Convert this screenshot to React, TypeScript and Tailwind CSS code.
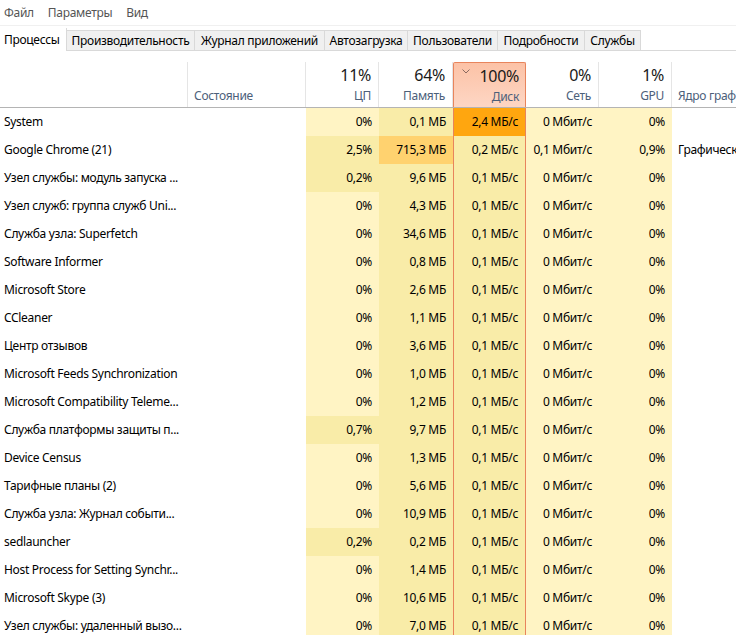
import React from "react";

const cols = "grid grid-cols-[187px_119px_73px_74px_73px_73px_73px_1fr]";

const L1 = "bg-[#fff4c4]";
const L2 = "bg-[#f9eca8]";

type Row = {
  name: string;
  cpu: string;
  mem: string;
  disk?: string;
  net?: string;
  gpu?: string;
  engine?: string;
};

const rows: Row[] = [
  { name: "System", cpu: "0%", mem: "0,1 МБ", disk: "2,4 МБ/с" },
  { name: "Google Chrome (21)", cpu: "2,5%", mem: "715,3 МБ", disk: "0,2 МБ/с", net: "0,1 Мбит/с", gpu: "0,9%", engine: "Графический процессор 0 - 3D" },
  { name: "Узел службы: модуль запуска ...", cpu: "0,2%", mem: "9,6 МБ" },
  { name: "Узел служб: группа служб Uni...", cpu: "0%", mem: "4,3 МБ" },
  { name: "Служба узла: Superfetch", cpu: "0%", mem: "34,6 МБ" },
  { name: "Software Informer", cpu: "0%", mem: "0,8 МБ" },
  { name: "Microsoft Store", cpu: "0%", mem: "2,6 МБ" },
  { name: "CCleaner", cpu: "0%", mem: "1,1 МБ" },
  { name: "Центр отзывов", cpu: "0%", mem: "3,6 МБ" },
  { name: "Microsoft Feeds Synchronization", cpu: "0%", mem: "1,0 МБ" },
  { name: "Microsoft Compatibility Teleme...", cpu: "0%", mem: "1,2 МБ" },
  { name: "Служба платформы защиты п...", cpu: "0,7%", mem: "9,7 МБ" },
  { name: "Device Census", cpu: "0%", mem: "1,3 МБ" },
  { name: "Тарифные планы (2)", cpu: "0%", mem: "5,6 МБ" },
  { name: "Служба узла: Журнал событи...", cpu: "0%", mem: "10,9 МБ" },
  { name: "sedlauncher", cpu: "0,2%", mem: "0,2 МБ" },
  { name: "Host Process for Setting Synchr...", cpu: "0%", mem: "1,4 МБ" },
  { name: "Microsoft Skype (3)", cpu: "0%", mem: "10,6 МБ" },
  { name: "Узел службы: удаленный вызо...", cpu: "0%", mem: "7,0 МБ" },
];

const tabs = [
  { label: "Процессы", w: "w-[67px]" },
  { label: "Производительность", w: "w-[128px]" },
  { label: "Журнал приложений", w: "w-[130px]" },
  { label: "Автозагрузка", w: "w-[83px]" },
  { label: "Пользователи", w: "w-[90px]" },
  { label: "Подробности", w: "w-[87px]" },
  { label: "Службы", w: "w-[56px]" },
];

function HeadCell({ pct, label }: { pct: string; label: string }) {
  return (
    <div className="h-[45px] border-r border-[#e5e5e5] flex flex-col items-end pr-[7px]">
      <div className="text-[16px] leading-[20px] mt-[3px] text-[#1a1a1a]">{pct}</div>
      <div className="text-[12px] leading-[16px] mt-[3px] text-[#4c607a]">{label}</div>
    </div>
  );
}

export default function App() {
  return (
    <div className="w-[736px] h-[635px] overflow-hidden bg-white text-[12px] tracking-[-0.3px] text-black font-['Noto_Sans',sans-serif]">
      {/* menu */}
      <div className="h-[26px] flex items-center gap-[14px] pl-[4px] border-b border-[#f0f0f0] text-[#555]">
        <span>Файл</span>
        <span>Параметры</span>
        <span>Вид</span>
      </div>

      {/* tabs */}
      <div className="h-[25px] flex items-end border-b border-[#d9d9d9]">
        {tabs.map((t, i) =>
          i === 0 ? (
            <div key={t.label} className={`${t.w} h-[23px] -mb-px bg-white border-r border-[#d9d9d9] pl-[4px] flex items-center`}>
              {t.label}
            </div>
          ) : (
            <div key={t.label} className={`${t.w} h-[20px] bg-[#f0f0f0] border-r border-t border-[#d9d9d9] flex items-center justify-center`}>
              {t.label}
            </div>
          )
        )}
      </div>

      {/* header */}
      <div className={`${cols} mt-[11px] border-b border-[#b4b4b4]`}>
        <div className="h-[45px]" />
        <div className="h-[45px] border-l border-r border-[#e5e5e5] flex items-end pl-[6px] pb-[2px] text-[#4c607a]">
          Состояние
        </div>
        <HeadCell pct="11%" label="ЦП" />
        <HeadCell pct="64%" label="Память" />
        <div className="h-[45px] border border-b-0 border-[#e8845c] rounded-t-[2px] bg-gradient-to-b from-[#fcc2a6] to-[#fdd6c4] flex flex-col items-end pr-[6px] relative">
          <svg className="absolute left-[8px] top-[6px]" width="8" height="5" viewBox="0 0 8 5">
            <path d="M0.5 0.5 L4 4 L7.5 0.5" fill="none" stroke="#8a6a60" strokeWidth="1" />
          </svg>
          <div className="text-[16px] leading-[20px] mt-[3px] text-[#1a1a1a]">100%</div>
          <div className="text-[12px] leading-[16px] mt-[3px] text-[#4c607a]">Диск</div>
        </div>
        <HeadCell pct="0%" label="Сеть" />
        <HeadCell pct="1%" label="GPU" />
        <div className="h-[45px] flex items-end pl-[6px] pb-[2px] whitespace-nowrap overflow-hidden text-[#4c607a]">
          Ядро графического процессора
        </div>
      </div>

      {/* rows */}
      {rows.map((r, i) => (
        <div key={i} className={`${cols} h-[28px] leading-[28px]`}>
          <div className="pl-[4px] whitespace-nowrap overflow-hidden">{r.name}</div>
          <div />
          <div className={`${r.cpu === "0%" ? L1 : L2} text-right pr-[7px]`}>{r.cpu}</div>
          <div className={`${i === 1 ? "bg-[#ffd26f]" : L2} text-right pr-[7px]`}>{r.mem}</div>
          <div className={`${i === 0 ? "bg-[#ffa60f]" : L2} border-x border-[#e8845c] text-right pr-[7px]`}>
            {r.disk ?? "0,1 МБ/с"}
          </div>
          <div className={`${L1} text-right pr-[7px]`}>{r.net ?? "0 Мбит/с"}</div>
          <div className={`${L1} text-right pr-[7px]`}>{r.gpu ?? "0%"}</div>
          <div className="pl-[6px] whitespace-nowrap overflow-hidden">{r.engine ?? ""}</div>
        </div>
      ))}
    </div>
  );
}
